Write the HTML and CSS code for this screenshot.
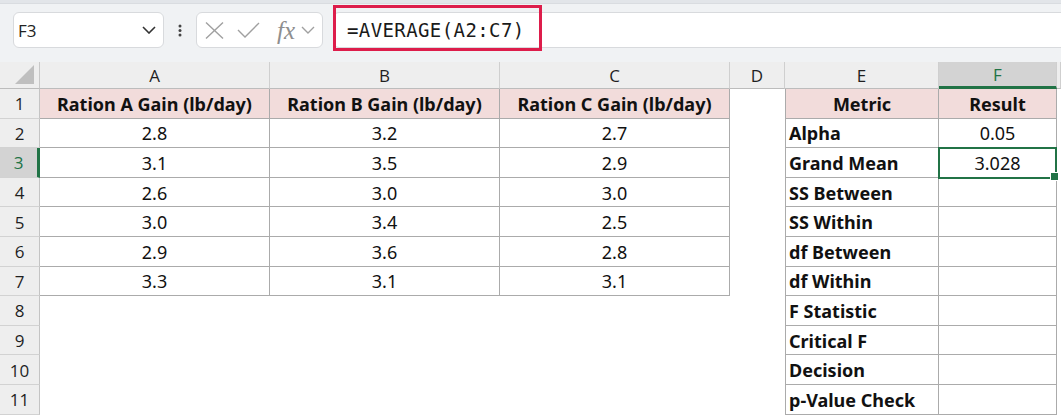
FILE: index.html
```html
<!doctype html>
<html>

<head>
	<title>One-way ANOVA - feed rations</title>
	<link rel="stylesheet" href="styles.css">
</head>

<body>
	<div class="topline"></div>
	<div class="toolbar">
		<div class="namebox">
			<span>F3</span>
			<svg class="chev" width="14" height="8" viewBox="0 0 14 8"><path d="M1 1l6 6 6-6" fill="none" stroke="#333" stroke-width="1.6"/></svg>
		</div>
		<div class="more">
			<svg width="4" height="13" viewBox="0 0 4 13"><circle cx="2" cy="2" r="1.5" fill="#444"/><circle cx="2" cy="6.5" r="1.5" fill="#444"/><circle cx="2" cy="11" r="1.5" fill="#444"/></svg>
		</div>
		<div class="fxbox">
			<svg width="19" height="17" viewBox="0 0 19 17"><path d="M1 0.5l17 16M18 0.5l-17 16" stroke="#a0a0a0" stroke-width="1.4" fill="none"/></svg>
			<svg width="23" height="16" viewBox="0 0 23 16"><path d="M1 8l7 7L22 1" stroke="#a0a0a0" stroke-width="1.4" fill="none"/></svg>
			<span class="fx">fx</span>
			<svg width="14" height="8" viewBox="0 0 14 8"><path d="M1 1l6 6 6-6" fill="none" stroke="#a0a0a0" stroke-width="1.4"/></svg>
		</div>
		<div class="formula">
			<span class="formula-text">=AVERAGE(A2:C7)</span>
			<div class="mark"></div>
		</div>
	</div>

	<div class="sheet">
		<!-- column headers -->
		<div class="corner"><div class="tri"></div></div>
		<div class="ch">A</div>
		<div class="ch">B</div>
		<div class="ch">C</div>
		<div class="ch">D</div>
		<div class="ch">E</div>
		<div class="ch ch-sel">F</div>
		<div class="ch"></div>

		<!-- row 1 -->
		<div class="rh">1</div>
		<div class="t th">Ration A Gain (lb/day)</div>
		<div class="t th">Ration B Gain (lb/day)</div>
		<div class="t th">Ration C Gain (lb/day)</div>
		<div class="c"></div>
		<div class="t tl th">Metric</div>
		<div class="t th">Result</div>
		<div class="c"></div>

		<!-- row 2 -->
		<div class="rh">2</div>
		<div class="t num">2.8</div>
		<div class="t num">3.2</div>
		<div class="t num">2.7</div>
		<div class="c"></div>
		<div class="t tl lbl">Alpha</div>
		<div class="t num">0.05</div>
		<div class="c"></div>

		<!-- row 3 -->
		<div class="rh rh-sel">3</div>
		<div class="t num">3.1</div>
		<div class="t num">3.5</div>
		<div class="t num">2.9</div>
		<div class="c"></div>
		<div class="t tl lbl">Grand Mean</div>
		<div class="t num sel">3.028</div>
		<div class="c"></div>

		<!-- row 4 -->
		<div class="rh">4</div>
		<div class="t num">2.6</div>
		<div class="t num">3.0</div>
		<div class="t num">3.0</div>
		<div class="c"></div>
		<div class="t tl lbl">SS Between</div>
		<div class="t"></div>
		<div class="c"></div>

		<!-- row 5 -->
		<div class="rh">5</div>
		<div class="t num">3.0</div>
		<div class="t num">3.4</div>
		<div class="t num">2.5</div>
		<div class="c"></div>
		<div class="t tl lbl">SS Within</div>
		<div class="t"></div>
		<div class="c"></div>

		<!-- row 6 -->
		<div class="rh">6</div>
		<div class="t num">2.9</div>
		<div class="t num">3.6</div>
		<div class="t num">2.8</div>
		<div class="c"></div>
		<div class="t tl lbl">df Between</div>
		<div class="t"></div>
		<div class="c"></div>

		<!-- row 7 -->
		<div class="rh">7</div>
		<div class="t num">3.3</div>
		<div class="t num">3.1</div>
		<div class="t num">3.1</div>
		<div class="c"></div>
		<div class="t tl lbl">df Within</div>
		<div class="t"></div>
		<div class="c"></div>

		<!-- row 8 -->
		<div class="rh">8</div>
		<div class="c"></div>
		<div class="c"></div>
		<div class="c"></div>
		<div class="c"></div>
		<div class="t tl lbl">F Statistic</div>
		<div class="t"></div>
		<div class="c"></div>

		<!-- row 9 -->
		<div class="rh">9</div>
		<div class="c"></div>
		<div class="c"></div>
		<div class="c"></div>
		<div class="c"></div>
		<div class="t tl lbl">Critical F</div>
		<div class="t"></div>
		<div class="c"></div>

		<!-- row 10 -->
		<div class="rh">10</div>
		<div class="c"></div>
		<div class="c"></div>
		<div class="c"></div>
		<div class="c"></div>
		<div class="t tl lbl">Decision</div>
		<div class="t"></div>
		<div class="c"></div>

		<!-- row 11 -->
		<div class="rh">11</div>
		<div class="c"></div>
		<div class="c"></div>
		<div class="c"></div>
		<div class="c"></div>
		<div class="t tl lbl">p-Value Check</div>
		<div class="t"></div>
		<div class="c"></div>
	</div>
</body>

</html>
```

FILE: styles.css
```css
* {
	box-sizing: border-box;
}

body {
	margin: 0;
	width: 1061px;
	height: 416px;
	overflow: hidden;
	background: #fff;
	font-family: "Open Sans", "Noto Sans", sans-serif;
	color: #1a1a1a;
}

.topline {
	height: 4px;
	background: #e2e5e9;
	border-bottom: 1px solid #d9dce0;
}

/* name box + formula bar */
.toolbar {
	height: 58px;
	background: #f0f2f4;
	display: flex;
	align-items: flex-start;
	padding: 8px 0 0 13px;
}

.namebox {
	width: 151px;
	height: 36px;
	background: #fff;
	border: 1px solid #d8dadd;
	border-radius: 6px;
	display: flex;
	align-items: center;
	justify-content: space-between;
	padding: 0 7px 0 4px;
	font-size: 17px;
	color: #222;
}

.more {
	width: 32px;
	height: 36px;
	display: flex;
	align-items: center;
	justify-content: center;
}

.fxbox {
	width: 127px;
	height: 36px;
	background: #fff;
	border: 1px solid #d8dadd;
	border-radius: 6px;
	display: flex;
	align-items: center;
	padding: 0 4px 0 8px;
	gap: 13px;
}

.fxbox .fx {
	font-family: "Liberation Serif", serif;
	font-style: italic;
	font-size: 25px;
	color: #8e8e8e;
	margin-left: 4px;
	margin-right: -7px;
	line-height: 1;
}

.formula {
	position: relative;
	flex: 1;
	height: 36px;
	margin-left: 10px;
	margin-right: -8px;
	background: #fff;
	border: 1px solid #d8dadd;
	border-radius: 6px;
	display: flex;
	align-items: center;
	padding-left: 13px;
}

.formula-text {
	font-family: "DejaVu Sans Mono", monospace;
	font-size: 19px;
	letter-spacing: 0.4px;
	color: #1a1a1a;
}

/* highlight drawn over the formula */
.mark {
	position: absolute;
	left: -1px;
	top: -8px;
	width: 209px;
	height: 46px;
	border: 3px solid #dd1d4b;
}

/* worksheet grid */
.sheet {
	display: grid;
	grid-template-columns: 40px 230px 230px 230px 55px 154px 118px 1fr;
	grid-template-rows: 27px repeat(11, 29.6px);
	font-family: "Noto Sans", "Open Sans", sans-serif;
	font-size: 18px;
	color: #111;
}

.sheet > div {
	display: flex;
	align-items: center;
	min-width: 0;
	white-space: nowrap;
	padding-top: 1px;
}

.corner {
	background: #eeeeee;
	border-right: 1px solid #c8c8c8;
	border-bottom: 1px solid #bcbcbc;
	position: relative;
}

.tri {
	position: absolute;
	right: 5px;
	bottom: 4px;
	width: 0;
	height: 0;
	border-left: 19px solid transparent;
	border-bottom: 19px solid #bfbfbf;
}

.ch {
	background: #eeeeee;
	border-right: 1px solid #cfcfcf;
	border-bottom: 1px solid #bcbcbc;
	justify-content: center;
	font-family: "Open Sans", "Noto Sans", sans-serif;
	font-size: 17px;
	color: #1f1f1f;
}

.ch-sel {
	background: #d3d3d3;
	color: #217346;
	border-bottom: 3px solid #217346;
}

.rh {
	background: #eeeeee;
	border-right: 1px solid #c4c4c4;
	border-bottom: 1px solid #d2d2d2;
	justify-content: center;
	font-family: "Open Sans", "Noto Sans", sans-serif;
	font-size: 17px;
	color: #1f1f1f;
}

.rh-sel {
	background: #d3d3d3;
	color: #217346;
	border-right: 3px solid #217346;
}

.c {
	background: #fff;
}

.t {
	border-right: 1px solid #ababab;
	border-bottom: 1px solid #ababab;
	background: #fff;
}

.tl {
	border-left: 1px solid #ababab;
}

.th {
	background: #f2dcdb;
	font-weight: 700;
	justify-content: center;
}

.num {
	justify-content: center;
}

.lbl {
	font-weight: 700;
	padding-left: 3px;
}

.sel {
	position: relative;
	border: 2px solid #217346;
	margin: -1px 0 -1px -1px;
}

.sel::after {
	content: "";
	position: absolute;
	right: -4px;
	bottom: -4px;
	width: 7px;
	height: 7px;
	background: #217346;
	border: 1px solid #fff;
}
```
